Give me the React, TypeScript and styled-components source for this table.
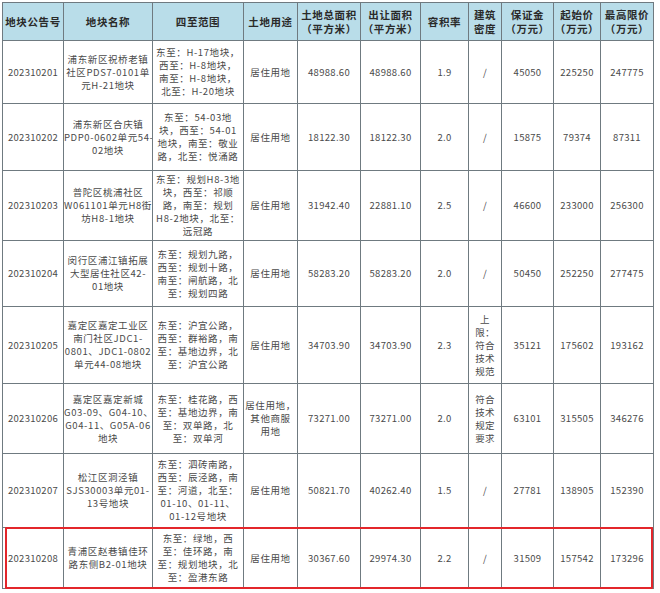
import React from "react";
import styled, { createGlobalStyle } from "styled-components";

const Global = createGlobalStyle`
  html, body { margin: 0; padding: 0; background: #ffffff; }
  body { font-family: "Noto Sans CJK SC", "Noto Sans", sans-serif; }
`;

const Wrap = styled.div`
  position: relative;
  padding: 2px 0 0 2px;
  width: 660px;
  height: 593px;
  box-sizing: border-box;
  overflow: hidden;
`;

const Table = styled.table`
  border-collapse: collapse;
  table-layout: fixed;
  width: 651px;
`;

const Th = styled.th<{ $dark?: boolean }>`
  background: #b9dde9;
  border: 1px solid #6f7a80;
  ${(p) => (p.$dark ? "border-left-color: #3a3a3a;" : "")}
  color: #2a2a2a;
  font-size: 10.5px;
  font-weight: 700;
  line-height: 14px;
  letter-spacing: 0.6px;
  padding: 0;
  height: 37px;
  white-space: pre;
  text-align: center;
  vertical-align: middle;
  overflow: hidden;
`;

const Td = styled.td<{ $dark?: boolean; $wide?: boolean }>`
  border: 1px solid #6f7a80;
  ${(p) => (p.$dark ? "border-left-color: #3a3a3a;" : "")}
  color: #4a4a4a;
  font-size: 9.5px;
  line-height: 13px;
  letter-spacing: ${(p) => (p.$wide ? "0.6px" : "0.3px")};
  padding: 0;
  white-space: pre;
  text-align: center;
  vertical-align: middle;
  overflow: hidden;
`;

const Tr = styled.tr<{ $h: number }>`
  height: ${(p) => p.$h}px;
`;

const Highlight = styled.div`
  position: absolute;
  left: 5px;
  top: 527px;
  width: 644px;
  height: 58px;
  border: 2px solid #e3262b;
  border-radius: 1px;
  pointer-events: none;
`;

const widths = [61, 89, 91, 54, 63, 60, 48, 33, 52, 47, 53];

const headers = [
  "地块公告号",
  "地块名称",
  "四至范围",
  "土地用途",
  "土地总面积\n（平方米）",
  "出让面积\n（平方米）",
  "容积率",
  "建筑\n密度",
  "保证金\n（万元）",
  "起始价\n（万元）",
  "最高限价\n（万元）",
];

type Row = {
  h: number;
  cells: string[];
};

const rows: Row[] = [
  {
    h: 63,
    cells: [
      "202310201",
      "浦东新区祝桥老镇\n社区PDS7-0101单\n元H-21地块",
      "东至：H-17地块，\n西至：H-8地块，\n南至：H-8地块，\n北至：H-20地块",
      "居住用地",
      "48988.60",
      "48988.60",
      "1.9",
      "/",
      "45050",
      "225250",
      "247775",
    ],
  },
  {
    h: 67,
    cells: [
      "202310202",
      "浦东新区合庆镇\nPDP0-0602单元54-\n02地块",
      "东至：54-03地\n块，西至：54-01\n地块，南至：敬业\n路，北至：悦涌路",
      "居住用地",
      "18122.30",
      "18122.30",
      "2.0",
      "/",
      "15875",
      "79374",
      "87311",
    ],
  },
  {
    h: 70,
    cells: [
      "202310203",
      "普陀区桃浦社区\nW061101单元H8街\n坊H8-1地块",
      "东至：规划H8-3地\n块，西至：祁顺\n路，南至：规划\nH8-2地块，北至：\n远冠路",
      "居住用地",
      "31942.40",
      "22881.10",
      "2.5",
      "/",
      "46600",
      "233000",
      "256300",
    ],
  },
  {
    h: 66,
    cells: [
      "202310204",
      "闵行区浦江镇拓展\n大型居住社区42-\n01地块",
      "东至：规划九路，\n西至：规划十路，\n南至：闸航路，北\n至：规划四路",
      "居住用地",
      "58283.20",
      "58283.20",
      "2.0",
      "/",
      "50450",
      "252250",
      "277475",
    ],
  },
  {
    h: 77,
    cells: [
      "202310205",
      "嘉定区嘉定工业区\n南门社区JDC1-\n0801、JDC1-0802\n单元44-08地块",
      "东至：沪宜公路，\n西至：群裕路，南\n至：基地边界，北\n至：沪宜公路",
      "居住用地",
      "34703.90",
      "34703.90",
      "2.3",
      "上\n限：\n符合\n技术\n规范",
      "35121",
      "175602",
      "193162",
    ],
  },
  {
    h: 70,
    cells: [
      "202310206",
      "嘉定区嘉定新城\nG03-09、G04-10、\nG04-11、G05A-06\n地块",
      "东至：桂花路，西\n至：基地边界，南\n至：双单路，北\n至：双单河",
      "居住用地，\n其他商服\n用地",
      "73271.00",
      "73271.00",
      "2.0",
      "符合\n技术\n规定\n要求",
      "63101",
      "315505",
      "346276",
    ],
  },
  {
    h: 74,
    cells: [
      "202310207",
      "松江区洞泾镇\nSJS30003单元01-\n13号地块",
      "东至：泗砖南路，\n西至：辰泾路，南\n至：河道，北至：\n01-10、01-11、\n01-12号地块",
      "居住用地",
      "50821.70",
      "40262.40",
      "1.5",
      "/",
      "27781",
      "138905",
      "152390",
    ],
  },
  {
    h: 61,
    cells: [
      "202310208",
      "青浦区赵巷镇佳环\n路东侧B2-01地块",
      "东至：绿地，西\n至：佳环路，南\n至：规划地块，北\n至：盈港东路",
      "居住用地",
      "30367.60",
      "29974.30",
      "2.2",
      "/",
      "31509",
      "157542",
      "173296",
    ],
  },
];

export default function App() {
  return (
    <Wrap>
      <Global />
      <Table>
        <colgroup>
          {widths.map((w, i) => (
            <col key={i} style={{ width: w }} />
          ))}
        </colgroup>
        <thead>
          <tr>
            {headers.map((h, i) => (
              <Th key={i} $dark={i === 8}>
                {h}
              </Th>
            ))}
          </tr>
        </thead>
        <tbody>
          {rows.map((r, ri) => (
            <Tr key={ri} $h={r.h}>
              {r.cells.map((c, ci) => (
                <Td key={ci} $dark={ci === 8} $wide={ci >= 1 && ci <= 3}>
                  {c}
                </Td>
              ))}
            </Tr>
          ))}
        </tbody>
      </Table>
      <Highlight />
    </Wrap>
  );
}
